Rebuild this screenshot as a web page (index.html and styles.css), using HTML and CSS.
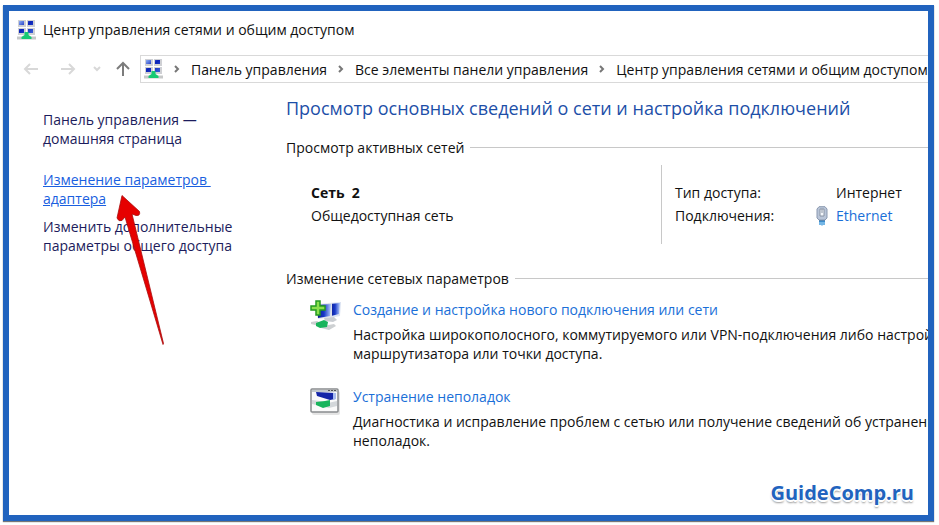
FILE: index.html
```
<!DOCTYPE html>
<html lang="ru">
<head>
  <meta charset="UTF-8">
  <meta name="viewport" content="width=device-width, initial-scale=1.0">
  <title>Центр управления сетями и общим доступом</title>
  <link rel="stylesheet" href="styles.css">
</head>
<body>
  <svg width="0" height="0" class="defs" aria-hidden="true">
    <defs>
      <linearGradient id="screen" x1="0" y1="0" x2="1" y2="1">
        <stop offset="0" stop-color="#8fb0f5"/>
        <stop offset="0.45" stop-color="#0a22b8"/>
        <stop offset="1" stop-color="#3a5fd8"/>
      </linearGradient>
      <linearGradient id="bigscreen" x1="0" y1="0" x2="1" y2="0">
        <stop offset="0" stop-color="#0a1a8c"/>
        <stop offset="0.5" stop-color="#1838c8"/>
        <stop offset="1" stop-color="#b4ccfa"/>
      </linearGradient>
      <symbol id="net" viewBox="0 0 19 20">
        <path d="M1 0h8v7H1zM10 0h8v7h-8zM1 8h8v7H1zM10 8h8v7h-8z" fill="#cfd0d4"/>
        <path d="M2 1h5v4H2zM11 1h5v4h-5zM2 9h5v4H2zM11 9h5v4h-5z" fill="url(#screen)"/>
        <path d="M0 16.500h19v3H0z" fill="#c6c8c8"/>
        <path d="M7.500 12h4v3l3 2v2h-10v-2l3-2z" fill="#17c974"/>
      </symbol>
    </defs>
  </svg>

  <div class="window">
    <header class="titlebar">
      <svg class="net-icon"><use href="#net"/></svg>
      <span>Центр управления сетями и общим доступом</span>
    </header>

    <nav class="toolbar">
      <button class="nav-btn" aria-label="Назад"><svg width="16" height="14" viewBox="0 0 16 14"><path d="M15 7H2M7 2L2 7l5 5" stroke="#d8d8d8"/></svg></button>
      <button class="nav-btn" aria-label="Вперёд"><svg width="16" height="14" viewBox="0 0 16 14"><path d="M1 7h13M9 2l5 5-5 5" stroke="#d8d8d8"/></svg></button>
      <button class="nav-btn small" aria-label="Журнал"><svg width="8" height="6" viewBox="0 0 8 6"><path d="M1 1l3 3 3-3" stroke="#d8d8d8"/></svg></button>
      <button class="nav-btn up" aria-label="Вверх"><svg width="16" height="16" viewBox="0 0 16 16"><path d="M8 15V2M2 8l6-6 6 6" stroke="#7c7c7c" stroke-width="2.200"/></svg></button>
      <div class="address">
        <svg class="net-icon"><use href="#net"/></svg>
        <svg class="chevron" viewBox="0 0 6 8"><path d="M1 1l3 3-3 3"/></svg>
        <a href="#">Панель управления</a>
        <svg class="chevron" viewBox="0 0 6 8"><path d="M1 1l3 3-3 3"/></svg>
        <a href="#">Все элементы панели управления</a>
        <svg class="chevron" viewBox="0 0 6 8"><path d="M1 1l3 3-3 3"/></svg>
        <a href="#">Центр управления сетями и общим доступом</a>
      </div>
    </nav>

    <div class="content">
      <aside class="sidebar">
        <a class="home" href="#">Панель управления —<br>домашняя страница</a>
        <a class="active" href="#">Изменение параметров&nbsp;<br>адаптера</a>
        <a href="#">Изменить дополнительные<br>параметры общего доступа</a>
        <svg class="arrow" width="52" height="154" viewBox="0 0 52 154">
          <path d="M8 1.500L25.500 17.500Q26.500 22 22 21.500L18 20L49.500 149.500L49 150.500L11 23L8 26.500Q4.500 28 3 24Z" fill="#e60000" stroke="#a80c0c" stroke-width="0.800"/>
        </svg>
      </aside>

      <main class="main">
        <h1>Просмотр основных сведений о сети и настройка подключений</h1>

        <h2 class="section-title">Просмотр активных сетей</h2>
        <section class="network">
          <div class="network-name">
            <strong>Сеть&nbsp; 2</strong>
            <span>Общедоступная сеть</span>
          </div>
          <dl class="network-info">
            <dt>Тип доступа:</dt>
            <dd>Интернет</dd>
            <dt>Подключения:</dt>
            <dd>
              <svg class="plug" width="12" height="20" viewBox="0 0 12 20">
                <path d="M3 .700h6l2 2.300v9l-2 2H3l-2-2V3z" fill="#b9c5d8" stroke="#8b99b0"/>
                <path d="M4 3h4v7H4z" fill="#f4f7fb" stroke="#8a94a4"/>
                <path d="M6 3v4" stroke="#8a94a4"/>
                <path d="M3 14h6v2H3z" fill="#5c87b0"/>
                <path d="M4 15v4M6 15v4.500M8 15v4" stroke="#2b90d9" stroke-width="1.300"/>
              </svg>
              <a href="#">Ethernet</a>
            </dd>
          </dl>
        </section>

        <h2 class="section-title">Изменение сетевых параметров</h2>
        <section class="task">
          <svg width="31" height="31" viewBox="0 0 31 31">
            <path d="M18 3l13-1-1 14-10 2z" fill="#dbe3f2"/>
            <path d="M20 4l10-1-1 11-8 2z" fill="url(#bigscreen)"/>
            <path d="M6 4l16-1v14L8 19z" fill="#dfe2e8"/>
            <path d="M7 5l14-1-1 12-12 2z" fill="url(#bigscreen)"/>
            <path d="M14 18l10-1 3 3-4 2-8-1z" fill="#c9cdd2"/>
            <path d="M1 22l6-1 6 3-4 2-8-2zM13 26l11-2 2 2-7 4-8-2z" fill="#cdd0d2"/>
            <path d="M6 23l8-3 4 2-1 5-7 1-4-2z" fill="#18b45c"/>
            <path d="M6 1h4v5h5v4h-5v5H6v-5H1V6h5z" fill="#8be04c" stroke="#249b20" stroke-width="1.500"/>
          </svg>
          <div class="task-text">
            <a href="#">Создание и настройка нового подключения или сети</a>
            <p>Настройка широкополосного, коммутируемого или VPN-подключения либо настройка<br>маршрутизатора или точки доступа.</p>
          </div>
        </section>
        <section class="task">
          <svg width="31" height="31" viewBox="0 0 31 31">
            <rect x="2" y="4" width="28" height="24" rx="2" fill="#e4e4e4"/>
            <rect x="1" y="2" width="27" height="23" rx="1" fill="#fafafa" stroke="#898c8e" stroke-width="1.500"/>
            <path d="M2 3h25v2H2z" fill="#c3c9ce"/>
            <path d="M18 3h2v1h-2zM21 3h2v1h-2zM24 3h2v1h-2z" fill="#555"/>
            <path d="M6 5l19 1v6l-5 1L7 9z" fill="#1526a8"/>
            <path d="M23 6l3 0v6l-3 1z" fill="#a9bdf0"/>
            <path d="M2 13l8 1 8 2 9-2v5l-8 2L2 17z" fill="#d3d7da"/>
            <path d="M6 15l9-1 5-1v6l-7 2-7-3z" fill="#18b45c"/>
          </svg>
          <div class="task-text">
            <a href="#">Устранение неполадок</a>
            <p>Диагностика и исправление проблем с сетью или получение сведений об устранении<br>неполадок.</p>
          </div>
        </section>
      </main>
    </div>

    <footer class="watermark">GuideComp.ru</footer>
  </div>
</body>
</html>
```

FILE: styles.css
```
* {
  box-sizing: border-box;
}
body {
  margin: 0;
  padding: 5px 5px 4px 3px;
  background-color: #fff;
  color: #111;
  font-family: "Open Sans", "Noto Sans", sans-serif;
  font-size: 14px;
  line-height: 19px;
}
a {
  color: #1a6fd8;
  text-decoration: none;
}
.defs {
  position: absolute;
}
.window {
  display: flex;
  flex-direction: column;
  min-height: calc(100vh - 9px);
  border: 6px solid #2163be;
  box-shadow: 0 1px 1px #777;
  overflow: hidden;
  white-space: nowrap;
}
.net-icon {
  flex: none;
  width: 19px;
  height: 20px;
}

/* title and address bar */
.titlebar {
  display: flex;
  align-items: center;
  gap: 7px;
  height: 37px;
  padding-left: 8px;
}
.toolbar {
  display: flex;
  align-items: center;
  margin-top: 7px;
  padding-left: 14px;
}
.nav-btn {
  display: flex;
  flex: none;
  width: 16px;
  margin-right: 21px;
  padding: 0;
  border: 0;
  background: none;
}
.nav-btn path {
  fill: none;
  stroke-width: 2;
}
.nav-btn.small {
  width: 8px;
  margin-left: -4px;
  margin-right: 14px;
}
.nav-btn.up {
  margin-right: 9px;
}
.address {
  display: flex;
  flex: 1;
  align-items: center;
  min-width: 0;
  height: 28px;
  padding-left: 3px;
  border: 1px solid #d9d9d9;
  border-right: 0;
  overflow: hidden;
}
.address a {
  color: #111;
}
.chevron {
  flex: none;
  width: 6px;
  height: 8px;
  margin: 0 11px;
  fill: none;
  stroke: #777;
  stroke-width: 2;
}

.content {
  display: flex;
  flex: 1;
}
.sidebar {
  position: relative;
  flex: none;
  width: 277px;
  padding: 27px 0 0 34px;
}
.sidebar a {
  display: block;
  margin-bottom: 9px;
  color: #1c1c5c;
}
.sidebar .home {
  margin-bottom: 22px;
}
.sidebar .active {
  color: #1a5fe0;
  text-decoration: underline;
}
.arrow {
  position: absolute;
  left: 105px;
  top: 111px;
}

.main {
  flex: 1;
  min-width: 0;
}
h1 {
  margin: 11px 0 16px;
  color: #1d4fa8;
  font-size: 18px;
  font-weight: 400;
  line-height: 28px;
}
.section-title {
  display: flex;
  align-items: center;
  gap: 6px;
  margin: 0;
  font-size: 14px;
  font-weight: 400;
}
.section-title::after {
  content: "";
  flex: 1;
  height: 1px;
  background-color: #c8c8c8;
}
.network {
  display: flex;
  margin: 8px 0 25px 25px;
}
.network-name {
  display: flex;
  flex-direction: column;
  gap: 4px;
  width: 351px;
  padding: 18px 0 19px;
  border-right: 1px solid #c8c8c8;
}
.network-info {
  display: grid;
  grid-template-columns: 161px auto;
  gap: 4px 0;
  align-content: start;
  margin: 0;
  padding: 18px 0 0 13px;
}
.network-info dd {
  position: relative;
  margin: 0;
}
.plug {
  position: absolute;
  left: -20px;
  top: 0;
}
.task {
  display: flex;
  gap: 12px;
  margin: 12px 0 24px 24px;
}
.task > svg {
  flex: none;
}
.task p {
  margin: 6px 0 0;
}

.watermark {
  align-self: flex-end;
  padding: 0 14px 10px 0;
  color: #2163be;
  font-size: 20px;
  font-weight: 700;
  line-height: 24px;
  text-shadow: 1px 1px 0 #fff, -1px 1px 0 #fff, 0 2px 0 #fff, 0 3px 2px #999;
}
```
